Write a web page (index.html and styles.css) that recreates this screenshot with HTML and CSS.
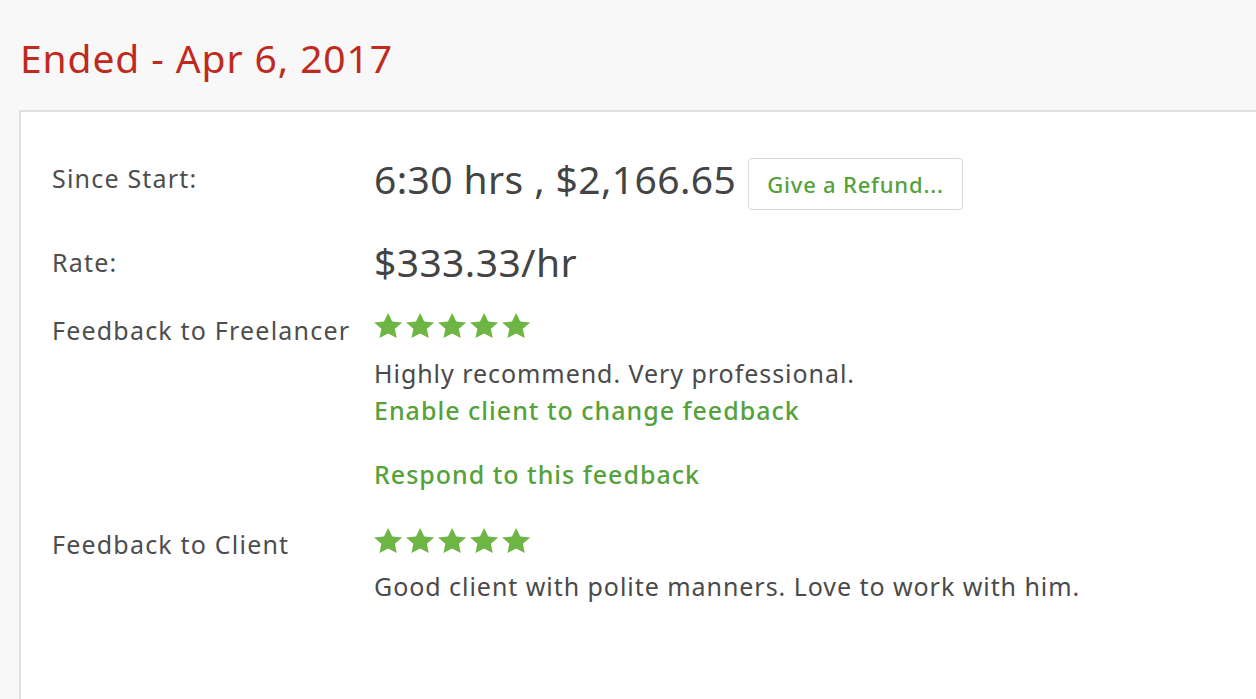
FILE: index.html
```html
<!DOCTYPE html>
<html>
<head>
<meta charset="utf-8">
<link rel="stylesheet" href="styles.css">
</head>
<body>
<h1 class="title">Ended - Apr 6, 2017</h1>
<div class="card">
  <div class="row row-start">
    <div class="label">Since Start:</div>
    <div class="value">
      <span class="big">6:30 hrs , $2,166.65</span>
      <button class="btn">Give a Refund...</button>
    </div>
  </div>
  <div class="row row-rate">
    <div class="label">Rate:</div>
    <div class="value"><span class="big">$333.33/hr</span></div>
  </div>
  <div class="row row-fb">
    <div class="label">Feedback to Freelancer</div>
    <div class="value col">
      <div class="stars">
        <svg viewBox="2 2 95.2 90.4" preserveAspectRatio="none" class="star"><path d="M50 2L64.1 32.6 97.6 36.6 72.8 59.4 79.4 92.4 50 76 20.6 92.4 27.2 59.4 2.4 36.6 35.9 32.6Z"/></svg>
        <svg viewBox="2 2 95.2 90.4" preserveAspectRatio="none" class="star"><path d="M50 2L64.1 32.6 97.6 36.6 72.8 59.4 79.4 92.4 50 76 20.6 92.4 27.2 59.4 2.4 36.6 35.9 32.6Z"/></svg>
        <svg viewBox="2 2 95.2 90.4" preserveAspectRatio="none" class="star"><path d="M50 2L64.1 32.6 97.6 36.6 72.8 59.4 79.4 92.4 50 76 20.6 92.4 27.2 59.4 2.4 36.6 35.9 32.6Z"/></svg>
        <svg viewBox="2 2 95.2 90.4" preserveAspectRatio="none" class="star"><path d="M50 2L64.1 32.6 97.6 36.6 72.8 59.4 79.4 92.4 50 76 20.6 92.4 27.2 59.4 2.4 36.6 35.9 32.6Z"/></svg>
        <svg viewBox="2 2 95.2 90.4" preserveAspectRatio="none" class="star"><path d="M50 2L64.1 32.6 97.6 36.6 72.8 59.4 79.4 92.4 50 76 20.6 92.4 27.2 59.4 2.4 36.6 35.9 32.6Z"/></svg>
      </div>
      <div class="text text-first">Highly recommend. Very professional.</div>
      <a class="link">Enable client to change feedback</a>
      <a class="link link-gap">Respond to this feedback</a>
    </div>
  </div>
  <div class="row row-fb2">
    <div class="label">Feedback to Client</div>
    <div class="value col">
      <div class="stars">
        <svg viewBox="2 2 95.2 90.4" preserveAspectRatio="none" class="star"><path d="M50 2L64.1 32.6 97.6 36.6 72.8 59.4 79.4 92.4 50 76 20.6 92.4 27.2 59.4 2.4 36.6 35.9 32.6Z"/></svg>
        <svg viewBox="2 2 95.2 90.4" preserveAspectRatio="none" class="star"><path d="M50 2L64.1 32.6 97.6 36.6 72.8 59.4 79.4 92.4 50 76 20.6 92.4 27.2 59.4 2.4 36.6 35.9 32.6Z"/></svg>
        <svg viewBox="2 2 95.2 90.4" preserveAspectRatio="none" class="star"><path d="M50 2L64.1 32.6 97.6 36.6 72.8 59.4 79.4 92.4 50 76 20.6 92.4 27.2 59.4 2.4 36.6 35.9 32.6Z"/></svg>
        <svg viewBox="2 2 95.2 90.4" preserveAspectRatio="none" class="star"><path d="M50 2L64.1 32.6 97.6 36.6 72.8 59.4 79.4 92.4 50 76 20.6 92.4 27.2 59.4 2.4 36.6 35.9 32.6Z"/></svg>
        <svg viewBox="2 2 95.2 90.4" preserveAspectRatio="none" class="star"><path d="M50 2L64.1 32.6 97.6 36.6 72.8 59.4 79.4 92.4 50 76 20.6 92.4 27.2 59.4 2.4 36.6 35.9 32.6Z"/></svg>
      </div>
      <div class="text text-client">Good client with polite manners. Love to work with him.</div>
    </div>
  </div>
</div>
</body>
</html>
```

FILE: styles.css
```css
html, body {
  margin: 0;
  padding: 0;
  background: #f8f8f8;
  overflow: hidden;
  height: 699px;
}
body {
  font-family: "Noto Sans", "Open Sans", sans-serif;
  color: #4a4a4a;
}
.title {
  margin: 0;
  padding: 35px 0 0 20px;
  font-size: 39px;
  line-height: 46px;
  letter-spacing: 0.9px;
  font-weight: 400;
  color: #bf2a20;
}
.card {
  margin: 29px -20px 0 19px;
  height: 620px;
  background: #fff;
  border-top: 2px solid #e0e0e0;
  border-left: 2px solid #e0e0e0;
  padding: 46px 0 0 31px;
  box-sizing: border-box;
}
.row {
  display: flex;
  align-items: flex-start;
}
.label {
  width: 322px;
  flex: none;
  font-size: 25px;
  line-height: 30px;
  letter-spacing: 1.2px;
  color: #4d4d4d;
}
.value {
  display: flex;
  align-items: flex-start;
}
.col {
  flex-direction: column;
}
.big {
  font-size: 39px;
  line-height: 42px;
  letter-spacing: 0.4px;
  color: #444;
}
.btn {
  margin-left: 12px;
  height: 52px;
  padding: 0 18px;
  background: #fff;
  border: 1px solid #d9d9d9;
  border-radius: 4px;
  font-family: inherit;
  font-size: 22px;
  letter-spacing: 0.8px;
  font-weight: 500;
  color: #55a13a;
}
.row-start .label { padding-top: 5px; }
.row-rate { margin-top: 31px; }
.row-rate .label { padding-top: 6px; }
.row-fb { margin-top: 30px; }
.row-fb .label { padding-top: 2px; }
.row-fb2 { margin-top: 39px; }
.row-fb2 .label { padding-top: 1px; }
.stars {
  display: flex;
  gap: 4px;
  height: 25px;
}
.star {
  width: 28px;
  height: 25px;
  fill: #6db644;
}
.text {
  font-size: 25px;
  line-height: 30px;
  letter-spacing: 0.95px;
  color: #4a4a4a;
}
.text-first { margin-top: 20px; }
.text-client { margin-top: 18px; }
.link {
  font-size: 25px;
  line-height: 30px;
  letter-spacing: 1px;
  margin-top: 7px;
  color: #55a13a;
  font-weight: 500;
}
.link-gap { margin-top: 34px; }
```
